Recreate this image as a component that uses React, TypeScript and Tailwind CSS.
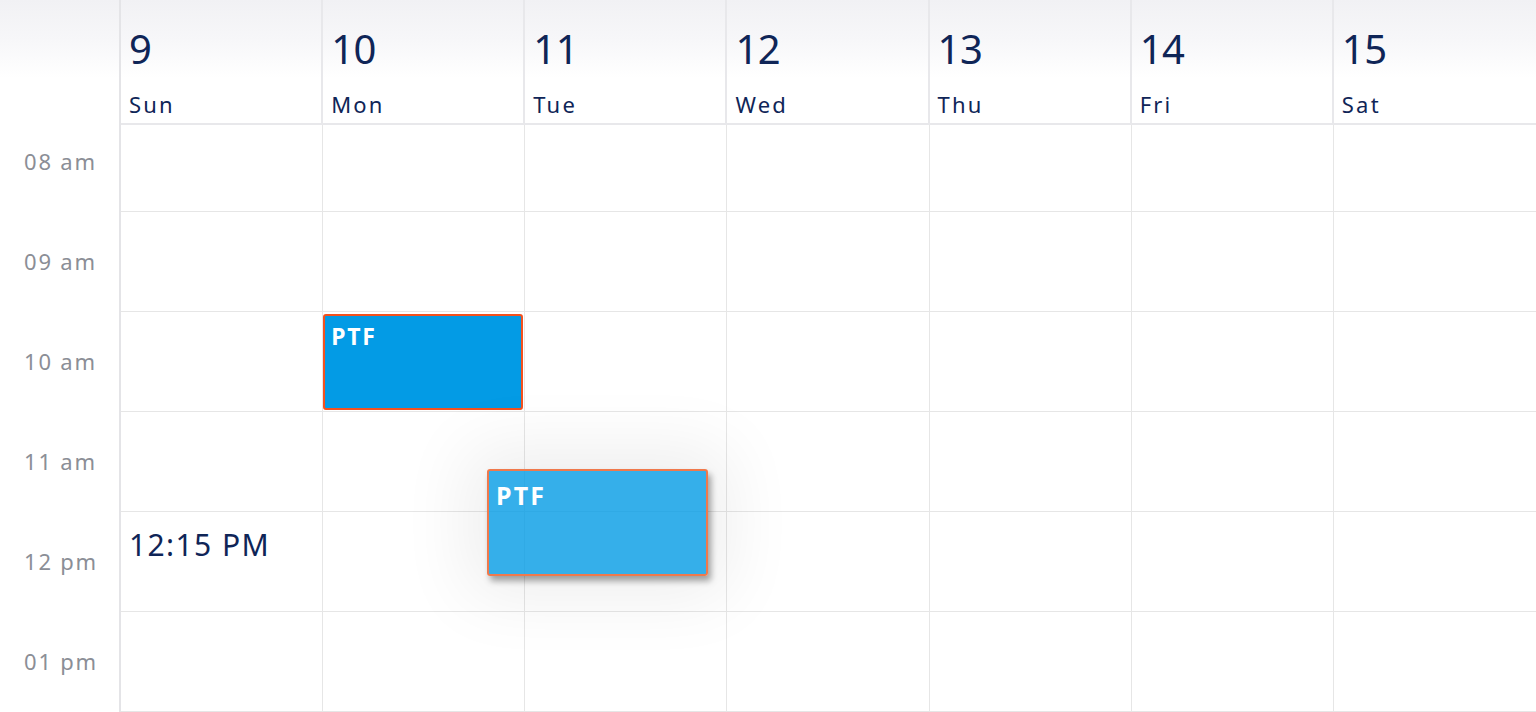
import React from "react";

const days = [
  { n: "9", d: "Sun" },
  { n: "10", d: "Mon" },
  { n: "11", d: "Tue" },
  { n: "12", d: "Wed" },
  { n: "13", d: "Thu" },
  { n: "14", d: "Fri" },
  { n: "15", d: "Sat" },
];

const hours = ["08 am", "09 am", "10 am", "11 am", "12 pm", "01 pm"];

export default function App() {
  return (
    <div
      className="relative w-[1536px] h-[712px] overflow-hidden bg-white"
      style={{ fontFamily: '"Noto Sans", "Open Sans", sans-serif' }}
    >
      {/* Header */}
      <div className="grid grid-cols-[121px_repeat(7,1fr)] h-[125px] bg-[linear-gradient(to_bottom,#f1f1f4_0px,#f7f7f9_40px,#ffffff_78px)]">
        <div className="border-r-2 border-[#e4e4e7]" />
        {days.map((day, i) => (
          <div
            key={day.d}
            className={`border-b-2 border-[#e8e8eb] pl-[8px] pt-[29px] text-[#0f2557] ${
              i < 6 ? "border-r-2" : ""
            }`}
          >
            <div className="text-[40px] leading-[40px] tracking-[-0.5px]">{day.n}</div>
            <div className="mt-[24px] text-[22px] leading-[22px] tracking-[2.2px]">{day.d}</div>
          </div>
        ))}
      </div>

      {/* Body */}
      <div className="relative grid grid-cols-[121px_repeat(7,1fr)]">
        <div className="border-r-2 border-[#e4e4e7]">
          {hours.map((h, r) => (
            <div
              key={h}
              className={`flex items-center pl-[24px] text-[22px] leading-[22px] tracking-[1.8px] text-[#8b8e96] ${
                r === 0 ? "h-[87px] pb-[16px]" : "h-[100px] pb-[2px]"
              }`}
            >
              {h}
            </div>
          ))}
        </div>
        {days.map((day, c) => (
          <div key={day.d} className={c < 6 ? "border-r border-[#e6e6e6]" : ""}>
            {hours.map((h, r) => (
              <div
                key={h}
                className={`relative border-b border-[#e6e6e6] ${
                  r === 0 ? "h-[87px]" : "h-[100px]"
                }`}
              >
                {c === 0 && r === 4 && (
                  <div className="pl-[8px] pt-[18px] text-[30px] leading-[30px] tracking-[1.4px] text-[#0f2557]">
                    12:15 PM
                  </div>
                )}
                {c === 1 && r === 2 && (
                  <div className="absolute left-0 right-[1px] top-[2px] bottom-[1px] rounded-[3px] border-2 border-[#f4511e] bg-[#039be5] pl-[6px] pt-[8px] text-[23px] font-bold leading-[24px] tracking-[1.8px] text-white">
                    PTF
                  </div>
                )}
              </div>
            ))}
          </div>
        ))}

        {/* Dragged event */}
        <div className="absolute left-[487px] top-[344px] h-[107px] w-[221px] rounded-[3px] border-2 border-[#f0794c] bg-[rgba(3,155,229,0.8)] pl-[7px] pt-[11px] text-[25px] font-bold leading-[26px] tracking-[2.2px] text-white shadow-[3px_5px_6px_rgba(0,0,0,0.35),0_0_70px_20px_rgba(0,0,0,0.07)]">
          PTF
        </div>
      </div>
    </div>
  );
}
